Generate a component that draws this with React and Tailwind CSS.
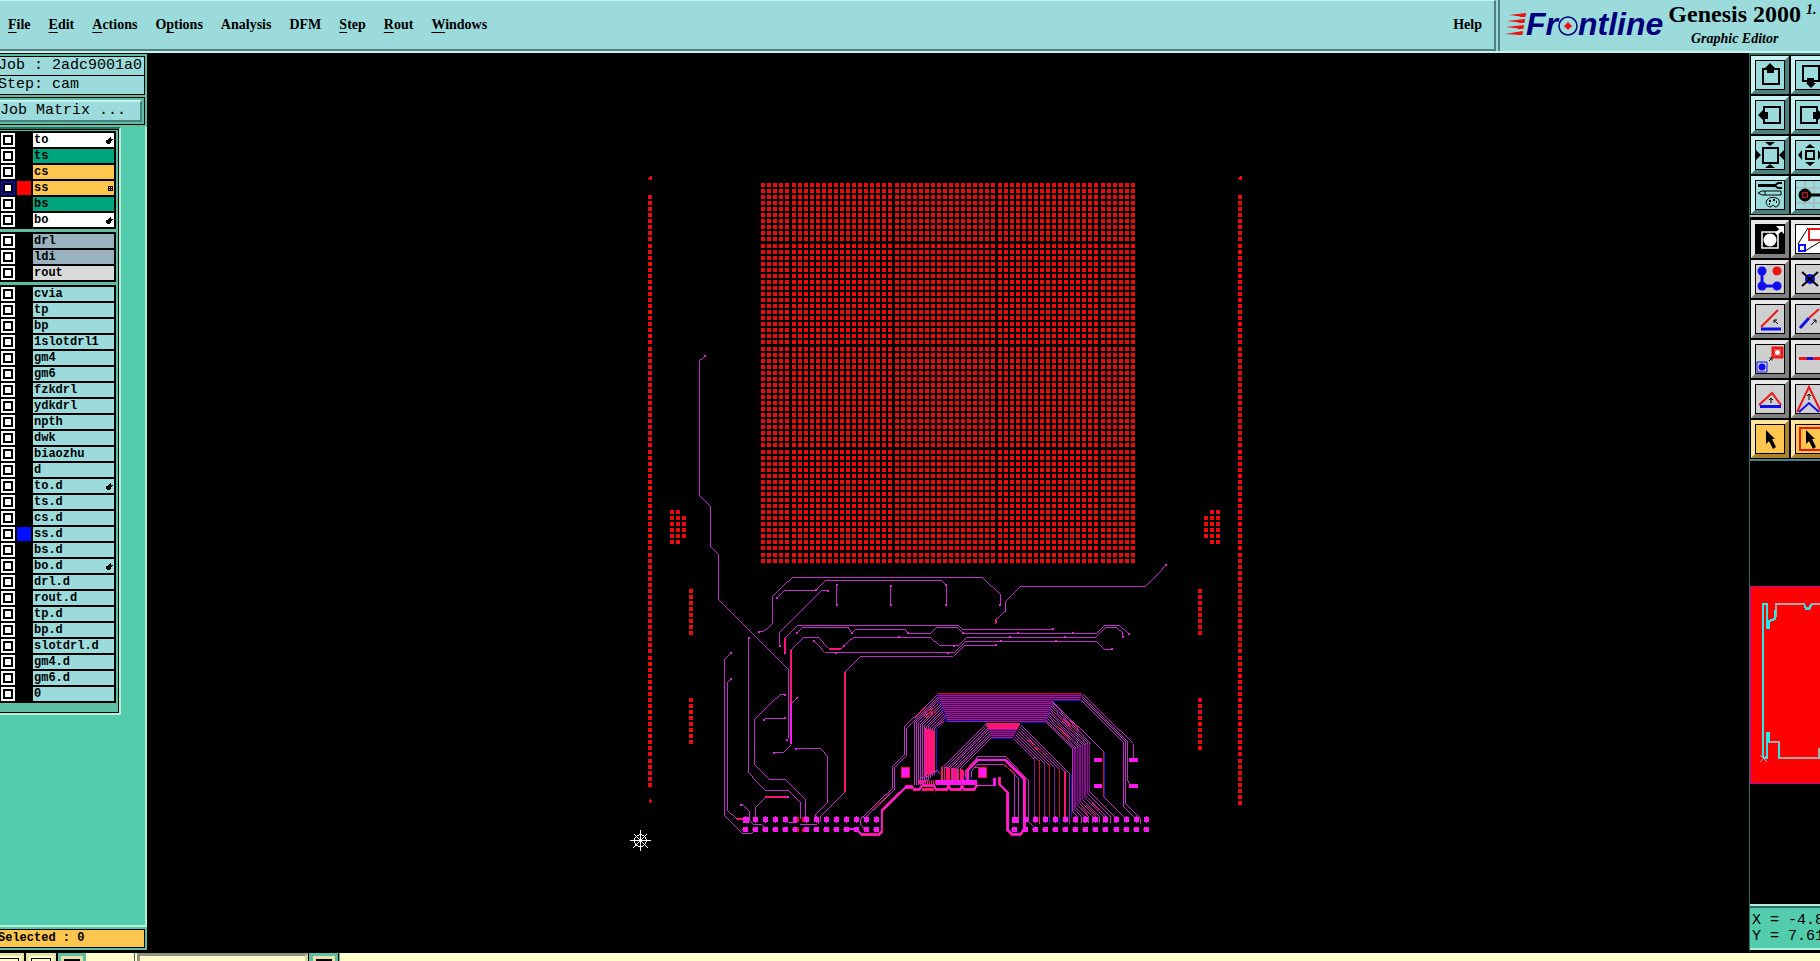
import React, { useState } from 'react';

const MENUS = [
  { label: 'File', key: 0 },
  { label: 'Edit', key: 0 },
  { label: 'Actions', key: 0 },
  { label: 'Options', key: 1 },
  { label: 'Analysis', key: -1 },
  { label: 'DFM', key: -1 },
  { label: 'Step', key: 0 },
  { label: 'Rout', key: 0 },
  { label: 'Windows', key: 0 },
];

const LAYER_GROUPS = [
  [
    { name: 'to', bg: 'bg-white', mark: 'hand' },
    { name: 'ts', bg: 'bg-[#00a57c]' },
    { name: 'cs', bg: 'bg-[#fcc64f]' },
    { name: 'ss', bg: 'bg-[#fcc64f]', swatch: 'bg-[#ff0000]', mark: 'grid' },
    { name: 'bs', bg: 'bg-[#00a57c]' },
    { name: 'bo', bg: 'bg-white', mark: 'hand' },
  ],
  [
    { name: 'drl', bg: 'bg-[#9ab2bd]' },
    { name: 'ldi', bg: 'bg-[#9ab2bd]' },
    { name: 'rout', bg: 'bg-[#d9d9d9]' },
  ],
  [
    { name: 'cvia' },
    { name: 'tp' },
    { name: 'bp' },
    { name: '1slotdrl1' },
    { name: 'gm4' },
    { name: 'gm6' },
    { name: 'fzkdrl' },
    { name: 'ydkdrl' },
    { name: 'npth' },
    { name: 'dwk' },
    { name: 'biaozhu' },
    { name: 'd' },
    { name: 'to.d', mark: 'hand' },
    { name: 'ts.d' },
    { name: 'cs.d' },
    { name: 'ss.d', swatch: 'bg-[#0010ff]' },
    { name: 'bs.d' },
    { name: 'bo.d', mark: 'hand' },
    { name: 'drl.d' },
    { name: 'rout.d' },
    { name: 'tp.d' },
    { name: 'bp.d' },
    { name: 'slotdrl.d' },
    { name: 'gm4.d' },
    { name: 'gm6.d' },
    { name: '0' },
  ],
];

const MenuLabel = ({ label, hot }) => {
  if (hot < 0) return label;
  return (
    <>
      {label.slice(0, hot)}
      <span className="underline decoration-1 underline-offset-[3px]">{label[hot]}</span>
      {label.slice(hot + 1)}
    </>
  );
};

const HandMark = () => (
  <svg width="7" height="7" viewBox="0 0 7 7" shapeRendering="crispEdges" aria-hidden="true">
    <path d="M4 0h1v2h2v1h-1v1h-1v2h-1v1h-3v-1h-1v-3h2v-1h1v-1h1z" />
  </svg>
);

const GridMark = () => (
  <svg width="5" height="5" viewBox="0 0 5 5" shapeRendering="crispEdges" aria-hidden="true">
    <path d="M0 0h5v5h-5zM1 1v1h1v-1zM3 1v1h1v-1zM1 3v1h1v-1zM3 3v1h1v-1z" fillRule="evenodd" />
  </svg>
);

const LayerRow = ({ layer, active, onToggle }) => (
  <div className="flex h-[14px] gap-[2px]">
    <input
      type="checkbox"
      aria-label={`Show layer ${layer.name}`}
      checked={active}
      onChange={onToggle}
      className="h-[14px] w-[14px] shrink-0 appearance-none border-2 border-white bg-white shadow-[inset_0_0_0_2px_#000] checked:border-[#0a0aa8]"
    />
    <span className={`w-[14px] shrink-0 ${layer.swatch || 'bg-black'}`} />
    <button
      className={`flex min-w-0 flex-1 items-center justify-between px-px text-left text-[12px] leading-[14px] font-bold ${
        layer.bg || 'bg-[#9cdbdb]'
      }`}
    >
      {layer.name}
      {layer.mark === 'hand' && <HandMark />}
      {layer.mark === 'grid' && <GridMark />}
    </button>
  </div>
);

const Sidebar = () => {
  const [visible, setVisible] = useState(['ss']);

  const toggle = (name) => {
    setVisible((prev) => (prev.includes(name) ? prev.filter((n) => n !== name) : [...prev, name]));
  };

  return (
    <aside className="flex w-[147px] shrink-0 flex-col overflow-hidden border-b-[3px] border-black bg-[#5fbfa5] font-['Liberation_Mono',monospace] text-black">
      <div className="border-t border-black pt-[2px] pr-[2px] text-[15px] leading-[18px] whitespace-pre">
        <div className="h-[20px] border-y border-r border-black bg-[#9cdbdb]">
          <div className="-ml-[2px]">Job : 2adc9001a0</div>
        </div>
        <div className="h-[19px] border-r border-b border-black bg-[#9cdbdb]">
          <div className="-ml-[2px]">Step: cam</div>
        </div>
        <div className="mt-[2px] border-y border-r border-black py-[2px] pr-[2px]">
          <button className="block h-[22px] w-full border-t-2 border-r-2 border-b-2 border-t-[#c9f2f2] border-r-[#4f8080] border-b-[#4f8080] bg-[#9cdbdb] text-left">
            Job Matrix ...
          </button>
        </div>
      </div>

      <div className="mt-[2px] flex-1 border-r-2 border-b-2 border-[#b0f0dc] bg-[#52ccac]">
        <div className="w-[121px] border-t-2 border-r-2 border-b-2 border-t-[#2a6e5d] border-r-[#b0f0dc] border-b-[#b0f0dc]">
          <div className="flex flex-col gap-[3px] border-t border-r border-b border-black bg-[#5fbfa5] pt-px pr-[2px] pb-[9px]">
            {LAYER_GROUPS.map((group, i) => (
              <div key={i} className="flex flex-col gap-[2px] bg-black py-[2px] pr-[2px] pl-px">
                {group.map((layer) => (
                  <LayerRow
                    key={layer.name}
                    layer={layer}
                    active={visible.includes(layer.name)}
                    onToggle={() => toggle(layer.name)}
                  />
                ))}
              </div>
            ))}
          </div>
        </div>
      </div>

      <div className="py-[2px] pr-[2px]">
        <div className="h-[19px] border-y border-r border-black bg-[#fcc64f] text-[12px] leading-[17px] font-bold">
          <div className="-ml-[2px]">Selected : 0</div>
        </div>
      </div>
    </aside>
  );
};

const Logo = () => (
  <div className="flex h-[34px] items-center text-[32px] leading-[34px] font-bold text-[#00007c] italic font-['Liberation_Sans',sans-serif]">
    <svg width="21" height="24" viewBox="0 0 21 24" fill="#ee1111" aria-hidden="true">
      <path d="M4 3 21 1 20 5zM2 9 20 7 19 11zM1 15 19 13 18 17zM0 22 18 19 17 23z" />
      <path d="M14 2h7l-1 3h-5zM13 8h7l-1 3h-5zM12 14h7l-1 3h-5zM11 20h7l-1 3h-5z" />
    </svg>
    <span>Fr</span>
    <svg width="20" height="24" viewBox="0 0 20 24" aria-hidden="true">
      <circle cx="10" cy="14" r="9" fill="none" stroke="#00007c" strokeWidth="1.5" />
      <path d="M10 10l4 4-4 4-4-4z" fill="#ee1111" />
    </svg>
    <span>ntline</span>
  </div>
);

const Header = () => (
  <header className="flex h-[53px] shrink-0 overflow-hidden border-b-2 border-[#c9f2f2] bg-[#9cdbdb] font-['Liberation_Serif',serif] font-bold text-black">
    <nav className="mr-[2px] flex flex-1 items-center gap-[18px] border-t border-r-2 border-b-2 border-t-[#c9f2f2] border-r-[#4f8080] border-b-[#4f8080] pr-[12px] pl-2 text-[14px] leading-[20px]">
      {MENUS.map((menu) => (
        <button key={menu.label}>
          <MenuLabel label={menu.label} hot={menu.key} />
        </button>
      ))}
      <button className="ml-auto">Help</button>
    </nav>
    <div className="flex w-[322px] shrink-0 gap-[5px] overflow-hidden border-l-2 border-[#4f8080] pl-[5px]">
      <div className="pt-[7px]">
        <Logo />
      </div>
      <div className="shrink-0 text-center">
        <div className="text-[24px] leading-[28px]">Genesis 2000</div>
        <div className="text-[14px] leading-[22px] italic">Graphic Editor</div>
      </div>
      <div className="shrink-0 text-[14px] leading-[20px] italic">1.</div>
    </div>
  </header>
);

// pads sit on a 6px lattice that gains one pixel every 17 cells
const latX = (i) => 761 + 6 * i + Math.floor((i + 12) / 17);
const latY = (i) => 183 + 6 * i + Math.floor((i + 7) / 17);
const range = (from, to) => Array.from({ length: to - from + 1 }, (_, i) => from + i);
const dot = (x, y) => `M${x} ${y}h4v4h-4z`;

const strip = (x, y, count) => range(0, count - 1).map((i) => dot(x, y + 6 * i)).join('');

const PAD_FIELD = range(0, 61)
  .map((c) => range(0, 62).map((r) => dot(latX(c), latY(r))).join(''))
  .join('');

const EDGE_PADS = [
  range(2, 99).map((r) => dot(648, latY(r))).join(''),
  range(2, 102).map((r) => dot(1238, latY(r))).join(''),
  strip(670, 510, 6),
  strip(676, 510, 6),
  strip(682, 516, 4),
  strip(1204, 516, 4),
  strip(1210, 510, 6),
  strip(1216, 510, 6),
  strip(689, 589, 8),
  strip(689, 698, 8),
  strip(1198, 589, 8),
  strip(1198, 698, 9),
].join('');

// traces use three drawing units to the pixel
const TRACES = [
  '256,-373 238,-357 238,47 271,79 271,200 295,223 295,358 505,567 505,775 500,780',
  '417,456 430,456 458,430 458,349 517,292 1088,292 1142,345 1142,375',
  '470,354 495,331 588,331 618,301 965,301 979,315 979,375',
  '480,498 480,457 604,332 625,332',
  '651,315 651,375',
  '813,318 813,375',
  '495,520 495,475 533,436 1015,436 1027,448 1299,448',
  '531,460 549,442 684,442 696,459 708,448 855,448 866,460 932,460 950,442 1013,442 1030,460 1430,460 1453,436 1498,436 1527,462',
  '513,510 552,472 594,472 626,505 664,505 700,472 932,472 959,498 1013,498 1040,472 1428,472 1458,442 1490,442 1509,460 1509,470',
  '582,483 614,517 1005,517 1037,484 1430,484 1453,508 1477,508',
  '675,576 721,529 1000,529 1033,496 1128,496',
  '1128,432 1128,418 1157,393 1157,365 1201,319 1578,319 1638,256',
  '675,937 603,1008 603,1020 592,1033 540,1033',
  '513,795 488,819 461,819',
  '517,668 531,654',
  '333,519 313,538 313,1006 367,1060 396,1060 405,1050',
  '333,597 322,608 322,990 350,1017 375,1017',
  '387,472 387,880 436,931 506,931 542,967 542,1017',
  '495,645 479,645 403,718 403,853 448,898 497,898 556,957 556,1017',
  '432,720 438,715 495,715',
  '527,807 602,807 623,829 623,967 588,1003 588,1017',
  '406,1017 406,984 436,954',
  '363,975 370,975 388,993 388,1020 400,1033 423,1033 430,1040',
  '505,1028 530,1028',
];

const HOT_TRACES = ['675,576 675,937', '513,510 513,670', '495,475 495,520', '626,507 664,507', '436,951 505,951', '350,1017 370,1017'];

const VIAS = [
  [256, -373], [417, 456], [472, 354], [588, 330], [625, 332], [480, 498], [495, 520], [651, 315], [651, 375],
  [813, 318], [813, 375], [978, 375], [978, 315], [1140, 375], [1638, 256], [1299, 447], [531, 459], [696, 459],
  [864, 459], [837, 470], [1029, 459], [1194, 459], [1359, 459], [1169, 470], [1335, 470], [1308, 482], [1527, 462],
  [1509, 470], [1477, 507], [582, 483], [648, 519], [672, 498], [984, 518], [1002, 498], [1128, 496], [1143, 484],
  [387, 474], [333, 519], [333, 597], [531, 654], [495, 645], [432, 720], [495, 714], [501, 780], [527, 807],
  [461, 819], [363, 975], [504, 951],
];

const PADS_LEFT = [375, 406, 436, 466, 496, 527, 560, 589, 619, 649, 680, 709, 739, 769];
const PADS_RIGHT = [464, 497, 526, 556, 586, 616, 646, 676, 706, 736, 769, 799, 829, 859];

const MAGENTA = '#ff18f0';
const VIOLET = '#c22fc8';
const PINK = '#ff1478';

const Fanout = () => (
  <g transform="translate(720 540)" fill="none" stroke={VIOLET} strokeWidth="3">
    {/* upper bus */}
    <path d="M232 100H667L660 123H580L558 187H262z" fill="#4a0850" stroke="none" />
    {range(0, 14).map((k) => (
      <path
        key={k}
        d={`M${232 + 2 * k} ${102 + 6 * k}H${k < 4 ? 667 - 2 * k : 588 - 2 * k}`}
        stroke={k === 0 ? '#c8102c' : '#a01aa0'}
      />
    ))}
    <path d="M580 123H662M262 183H380M480 187H558M232 104L260 182M580 124L558 187" stroke="#1010b0" />

    {/* inner bus */}
    <path d="M378 188H482L462 236H397z" fill="#4a0850" stroke="none" />
    {range(0, 7).map((k) => (
      <path
        key={k}
        d={`M${379 + 2 * k} ${192 + 6 * k}H${481 - 3 * k}`}
        stroke={k < 3 ? PINK : '#a01aa0'}
        strokeWidth={k < 3 ? 5 : 3}
      />
    ))}
    <path d="M397 237H462" stroke="#1010b0" />

    {/* far left pair */}
    <path d="M232 104L135 199V283L98 320V384L8 472M234 110L141 203V285L104 322V388L18 472" />
    <path d="M200 140L165 175M90 400L40 446" stroke="#e01030" />

    {/* left fan */}
    {range(0, 11).map((j) => (
      <path
        key={j}
        d={`M${236 + 2 * j} ${114 + 6 * j}L${163 + 6 * j} ${187 + 2 * j}V${j < 5 ? 374 : 374 - (j - 4) * 5}`}
        stroke={j === 11 ? '#1818c8' : VIOLET}
      />
    ))}
    <path d="M199 204V350M205 206V346M211 208V342M217 210V338M223 212V336" stroke={PINK} strokeWidth="5" />
    <path d="M195 158l26-14M192 166l34-14M198 172l30-16M232 196l20-12" stroke="#f01050" />
    <path d="M180 355L200 350 232 330 240 342" />

    {/* inner left fan */}
    {range(0, 7).map((j) => (
      <path key={j} d={`M${379 + 2 * j} ${192 + 6 * j}L${245 + 8 * j} 326V362`} />
    ))}
    {range(0, 9).map((j) => (
      <path key={j} d={`M${247 + 7 * j} ${320 + j}V362`} stroke={PINK} strokeWidth="5" />
    ))}
    <path d="M316 330V362M334 336V362" stroke="#1818c8" />

    {/* inner right fan */}
    {range(0, 7).map((j) => (
      <path key={j} d={`M${462 + 3 * j} ${236 - 6 * j}L${525 + 15 * j} ${299 + 6 * j}`} />
    ))}
    {range(0, 7).map((j) => (
      <path
        key={j}
        d={`M${525 + 15 * j} ${292 + 7 * j}V${j % 2 ? 492 : 470}`}
        stroke={['#8a168c', '#ff1478', '#8a168c', '#1818c8', '#8a168c', '#1818c8', '#ff1478', '#a018a0'][j]}
        strokeWidth={j === 6 ? 5 : 3}
      />
    ))}
    <path d="M540 300V470M570 312V470M600 326V470" stroke="#c8102c" />
    <path d="M635 345V470" stroke="#1818c8" />
    <path d="M505 240l18 14M510 250l24 20M530 262l24 20" stroke="#f01050" />

    {/* right fan */}
    {range(0, 10).map((j) => (
      <path
        key={j}
        d={`M${558 + 2 * j} ${187 - 6 * j}L${638 + 5 * j} ${267 - 2 * j}V${455 - 6 * j}L${653 + 11 * j} 470V490`}
        stroke={j > 1 && j < 9 ? '#b428b8' : VIOLET}
      />
    ))}
    <path d="M640 268V452L690 396V250z" fill="#5c0c62" fillOpacity="0.7" stroke="none" />
    <path
      d="M605 172l30 26M610 184l36 32M592 198l36 34M630 180l28 30M598 212l24 24M662 440l22 24M680 436l26 28M695 428l28 26"
      stroke="#f01050"
    />
    <path d="M580 128L731 274V410L792 470" />
    <path d="M730 274V410" stroke="#c8102c" />
    <path d="M733 276V410" stroke="#1818c8" />

    {/* far right */}
    <path d="M668 101L820 251V294M667 108L802 243V362L812 374M665 114L796 245V430L834 468M663 120L790 247V440L820 470M834 468L842 476V492" />

    {/* ring around the centre pad */}
    <path d="M318 352V330L352 291H437L507 362V485L520 498M334 350V334L352 314H432L475 354V490M345 322H360M463 346V470" />
    <path d="M437 316L464 342M430 312L455 334" stroke="#e01030" />
    <path d="M322 360V331L352 300H436L494 357V508L480 523H456L443 512V398L419 374V352" stroke={PINK} strokeWidth="8" />
    <path d="M324 360V332L353 301H436L493 358V506L480 522H458L444 510V398L419 372V352" stroke={MAGENTA} strokeWidth="5" />
    <path d="M351 376H402V354M405 378V354" stroke={MAGENTA} strokeWidth="4" />

    {/* connector row */}
    <path d="M176 367H230" stroke={PINK} strokeWidth="13" strokeDasharray="4 2" />
    <path d="M228 367H350" stroke={MAGENTA} strokeWidth="14" />
    <path
      d="M135 380H156L163 389H178L186 377M186 389H222M186 377H222L228 389H260L266 377 272 389H302L306 377 312 389H342L351 376"
      stroke={PINK}
      strokeWidth="7"
    />
    <path
      d="M135 380H156L163 389H178L186 377H222L228 389H260L266 377 272 389H302L306 377 312 389H342L351 376"
      stroke={MAGENTA}
      strokeWidth="4"
    />

    <g fill={MAGENTA} stroke="#e8103c">
      <rect x="124" y="322" width="24" height="30" />
      <rect x="357" y="322" width="24" height="30" />
    </g>
    <path d="M702 294h24v12h-24zM702 373h24v12h-24zM807 294h26v12h-26zM807 372h26v12h-26z" fill={MAGENTA} stroke="none" />
  </g>
);

const BoardCanvas = () => (
  <main className="min-w-0 flex-1 bg-black">
    <svg className="block h-full w-full" viewBox="147 53 1602 900" shapeRendering="crispEdges" role="img" aria-label="Board layers">
      <path d={PAD_FIELD} fill="#ea0c0c" />
      <path d={EDGE_PADS} fill="#ea0c0c" />
      <path d="M648 178l2-2h2v4h-3zM648 801l2-2 2 2-2 2zM1238 178l2-2h2v4h-3z" fill="#ea0c0c" />
      <g transform="translate(620 480) scale(0.33333)">
        <g fill="none" stroke={VIOLET} strokeWidth="3">
          {TRACES.map((points) => (
            <polyline key={points} points={points} />
          ))}
        </g>
        <g fill="none" stroke={PINK} strokeWidth="5">
          {HOT_TRACES.map((points) => (
            <polyline key={points} points={points} />
          ))}
        </g>
        <path d="M513 670V792" stroke={MAGENTA} strokeWidth="5" />
        {VIAS.map(([x, y]) => (
          <rect key={`${x}-${y}`} x={x - 3} y={y - 3} width="6" height="6" fill="#e028dc" />
        ))}
        <path d="M1128 420V430" stroke={PINK} strokeWidth="6" />
        <Fanout />
        <g fill="none">
          <path d="M680 1047H708L725 1064H776L786 1056V992L857 922H880" stroke={PINK} strokeWidth="8" />
          <path d="M680 1047H708L725 1064H776L785 1056V992L857 921H880" stroke={MAGENTA} strokeWidth="5" />
          <path d="M742 1017L727 1010 721 1020V1032L732 1044" stroke={VIOLET} strokeWidth="3" />
        </g>
        {[...PADS_LEFT, ...PADS_RIGHT.map((x) => x + 720)].map((x, i) => (
          <g key={x} fill={MAGENTA}>
            <rect x={x - 7} y={1010} width={i % 14 === 0 ? 18 : 15} height={i % 14 === 0 ? 18 : 15} />
            <rect x={x - 7} y={1041} width="15" height="15" />
            <rect x={x - 10} y={1047} width="3" height="3" />
            <rect x={x - 1} y={1007} width="3" height="21" />
          </g>
        ))}
        <path d="M534 1012V1026M549 1012V1026M534 1044V1056M549 1044V1056" stroke="#e01030" strokeWidth="4" />
        <g fill="none" stroke="#ffffff" strokeWidth="3">
          <path d="M30 1082H93M61 1050V1114M40 1061L83 1104M83 1061L40 1104" />
          <circle cx="61" cy="1082" r="18" />
        </g>
      </g>
    </svg>
  </main>
);

const Pointer = () => <path d="M11 6l9 9-3 0 4 8-3 2-4-8-3 3z" fill="#000" stroke="none" />;

const BLUE = '#1010ee';
const RED = '#e81818';

const VIEW_TOOLS = [
  { label: 'Pan up', icon: <path d="M8 9H24V24H8z" fill="none" strokeWidth="2" />, solid: 'M15 3l5 5h-1v5h-7v-5h-2z' },
  { label: 'Pan down', icon: <path d="M8 6H24V21H8z" fill="none" strokeWidth="2" />, solid: 'M16 28l-5-5h1v-5h7v5h2z' },
  { label: 'Pan left', icon: <path d="M9 7H25V23H9z" fill="none" strokeWidth="2" />, solid: 'M3 15l5-5v2h5v7h-5v1z' },
  { label: 'Pan right', icon: <path d="M6 7H22V23H6z" fill="none" strokeWidth="2" />, solid: 'M28 15l-5-5v2h-5v7h5v1z' },
  {
    label: 'Zoom out',
    icon: <path d="M8 8H23V23H8z" fill="none" strokeWidth="2" />,
    solid: 'M10 2h10l-5 4zM10 28h10l-5-4zM1 10v10l5-5zM29 10v10l-5-5z',
  },
  {
    label: 'Zoom in',
    icon: <path d="M11 11H19V19H11z" fill="none" strokeWidth="2" />,
    solid: 'M10 8h10l-5-4zM10 22h10l-5 4zM7 10v10l-4-5zM23 10v10l4-5z',
  },
  {
    label: 'Display settings',
    icon: (
      <g fill="none">
        <path d="M3 5.5H20" strokeWidth="3" />
        <path d="M27 3h-4l-3 2.5 3 2.500h4" strokeWidth="2" />
        <path d="M3 13l4-2h19v4H7zM10 11v4" />
        <path d="M12 20c3-4 10-3 12 0 1 4-1 7-4 7l-2-2-2 2c-4 0-6-4-4-7z" />
        <path d="M14 21h2M18 20h2M21 22h1M14 24h1" strokeWidth="2" />
      </g>
    ),
  },
  {
    label: 'Snap',
    icon: (
      <g fill="none">
        <path d="M10 1V29M19 1V29M1 8H29M1 23H29" stroke="#b0a8a8" />
        <circle cx="10" cy="15" r="6" fill="#000" />
        <path d="M16 15H30" strokeWidth="3" />
        <path d="M7.5 12.5h5v5h-5z" stroke="#d01818" />
      </g>
    ),
  },
];

const EDIT_TOOLS = [
  {
    label: 'Add feature',
    face: 'bg-white',
    icon: (
      <g>
        <path d="M1 1H29V29H1z" />
        <path d="M7 8H23V24H7z" fill="none" stroke="#fff" strokeWidth="1.5" />
        <circle cx="15" cy="16" r="6.5" fill="#fff" stroke="none" />
        <path d="M21 10l6-5" stroke="#fff" strokeWidth="3" />
        <path d="M21 2h8v8z" fill="#fff" stroke="none" />
      </g>
    ),
  },
  {
    label: 'Change size',
    face: 'bg-white',
    icon: (
      <g fill="none">
        <path d="M3 20L13 4M10 27L28 16" />
        <path d="M14 5H28V16H14z" stroke={RED} strokeWidth="2" />
        <path d="M4 21H10V27H4z" stroke={BLUE} strokeWidth="2" />
      </g>
    ),
  },
  {
    label: 'Connect',
    icon: (
      <g fill={BLUE} stroke="none">
        <path d="M7 7V22H22" fill="none" stroke={BLUE} strokeWidth="3" />
        <circle cx="7" cy="7" r="4.5" />
        <circle cx="7" cy="22" r="4.5" />
        <circle cx="22" cy="22" r="4.5" />
        <circle cx="22" cy="7" r="4.5" fill="#ee1111" />
      </g>
    ),
  },
  {
    label: 'Delete',
    icon: (
      <g>
        <circle cx="15" cy="15" r="5" fill={BLUE} stroke="none" />
        <path d="M7 8L23 22M23 8L7 22" strokeWidth="2" />
      </g>
    ),
  },
  {
    label: 'Change angle',
    icon: (
      <g fill="none">
        <path d="M6 23L23 6" stroke={RED} strokeWidth="2" />
        <path d="M6 25H26" stroke={BLUE} strokeWidth="3" />
        <path d="M19 16l4 4M19 19v-3h3" />
      </g>
    ),
  },
  {
    label: 'Extend line',
    icon: (
      <g fill="none">
        <path d="M14 14L24 5" stroke={RED} strokeWidth="2" />
        <path d="M5 24L14 14" stroke={BLUE} strokeWidth="3" />
        <path d="M16 21l5-5M18 16h3v3" />
      </g>
    ),
  },
  {
    label: 'Move',
    icon: (
      <g fill="none">
        <path d="M18 4H27V13H18z" fill="#fff" stroke={RED} strokeWidth="3" />
        <circle cx="22.5" cy="8.5" r="3" stroke={RED} />
        <path d="M2 18H12V28H2z" stroke={BLUE} />
        <circle cx="7" cy="23" r="3.5" fill={BLUE} stroke="none" />
        <path d="M14 17l3-3M14.5 14h2.500v2.500" />
      </g>
    ),
  },
  {
    label: 'Split line',
    icon: (
      <g fill="none" strokeWidth="3">
        <path d="M4 14.5H30" stroke={RED} />
        <path d="M12 14.5H18" stroke={BLUE} />
      </g>
    ),
  },
  {
    label: 'Slide segment',
    icon: (
      <g fill="none">
        <path d="M4 21L17 9 26 21" stroke={RED} strokeWidth="2" />
        <path d="M5 22.5H26" stroke={BLUE} strokeWidth="3" />
        <path d="M16 19v-5M14 16l2-2 2 2" />
      </g>
    ),
  },
  {
    label: 'Slide corner',
    icon: (
      <g fill="none" strokeWidth="2">
        <path d="M2 28L14 3 26 28" stroke={RED} />
        <path d="M4 28L14 19 24 28" stroke={BLUE} />
        <path d="M14 16v-6M12 12l2-2 2 2" strokeWidth="1" />
      </g>
    ),
  },
  { label: 'Select feature', face: 'bg-[#fcc64f]', icon: <Pointer /> },
  {
    label: 'Select in window',
    face: 'bg-[#fcc64f]',
    icon: (
      <g>
        <path d="M5 4H27V26H5z" fill="none" stroke={RED} strokeWidth="2" />
        <Pointer />
      </g>
    ),
  },
];

const ToolButton = ({ tool, face, bevel }) => (
  <button aria-label={tool.label} className={`h-[38px] w-[38px] border-4 ${bevel} ${tool.face || face}`}>
    <span className="block h-[30px] w-[30px] border border-black">
      <svg width="28" height="28" viewBox="1 1 28 28" stroke="#000" aria-hidden="true">
        {tool.icon}
        {tool.solid && <path d={tool.solid} stroke="none" />}
      </svg>
    </span>
  </button>
);

const Overview = () => (
  <svg
    className="block w-[80px] flex-1 bg-black"
    viewBox="1750 461 80 444"
    preserveAspectRatio="xMinYMin slice"
    shapeRendering="crispEdges"
    role="img"
    aria-label="Overview"
  >
    <rect x="1750" y="586" width="90" height="198" fill="#b0109a" />
    <rect x="1751" y="587" width="90" height="196" fill="#ff0000" />
    <g fill="none" strokeWidth="2">
      <path d="M1776 617V604H1804L1806 608H1810L1812 604H1830M1768 742H1779V758H1819V748" stroke="#a8a8a8" />
      <path
        d="M1763 758V604H1767V628H1769V621L1775 619V610M1804 604L1806 609H1809L1811 604M1767 758V733H1769V742M1779 745V758M1763 758H1768"
        stroke="#28e8e8"
      />
      <path d="M1760 755L1767 762M1767 755L1760 762" stroke="#a8a8a8" strokeWidth="1" />
    </g>
  </svg>
);

const ToolPanel = () => (
  <aside className="flex w-[71px] shrink-0 flex-col overflow-hidden border-b-[3px] border-l border-b-black border-l-[#2f6e60] bg-black">
    <div className="grid w-[79px] grid-cols-2 gap-[2px] border-t-2 border-[#2f6e60] pt-px pb-px pl-px">
      {VIEW_TOOLS.map((tool) => (
        <ToolButton
          key={tool.label}
          tool={tool}
          face="bg-[#9cdbdb]"
          bevel="border-t-[#c9f2f2] border-l-[#c9f2f2] border-r-[#4f8080] border-b-[#4f8080]"
        />
      ))}
    </div>
    <div className="grid w-[79px] grid-cols-2 gap-[2px] border-t-2 border-b-2 border-t-[#b8c8c0] border-b-[#4f8080] pt-[3px] pb-px pl-px">
      {EDIT_TOOLS.map((tool) => (
        <ToolButton
          key={tool.label}
          tool={tool}
          face="bg-[#cfcfcf]"
          bevel={
            tool.face === 'bg-[#fcc64f]'
              ? 'border-t-[#fde3a0] border-l-[#fde3a0] border-r-[#a8822c] border-b-[#a8822c]'
              : 'border-t-[#e8e8e8] border-l-[#e8e8e8] border-r-[#808080] border-b-[#808080]'
          }
        />
      ))}
    </div>
    <Overview />
    <div className="shrink-0 border-y-2 border-[#b0f0dc] bg-[#52ccac] font-['Liberation_Mono',monospace] text-[15px] leading-[16px] whitespace-pre text-black">
      <div className="border-t-2 border-[#2f6e60] pt-[5px] pb-[3px] pl-[2px]">
        <div>X = -4.8</div>
        <div>Y = 7.61</div>
      </div>
    </div>
  </aside>
);

const CommandBar = () => (
  <footer className="flex h-[8px] shrink-0 overflow-hidden bg-[#ffffcc]">
    <button aria-label="Previous command" className="h-[28px] w-[24px] border-[3px] border-l-0 border-[#e6e2a8] p-[2px] pl-0">
      <span className="block h-full border border-l-0 border-black" />
    </button>
    <span className="w-[2px] bg-black" />
    <button aria-label="Next command" className="h-[28px] w-[30px] border-[3px] border-[#e6e2a8] p-[2px]">
      <span className="block h-full border border-black" />
    </button>
    <span className="w-[2px] bg-black" />
    <button aria-label="History" className="h-[28px] w-[28px] border-[3px] border-[#5fbfa5] bg-[#e6e2a8] p-[3px]">
      <span className="block h-full border-2 border-black" />
    </button>
    <span className="mr-[2px] ml-[48px] w-px bg-[#2f6e60]" />
    <input
      aria-label="Command"
      className="h-[28px] w-[171px] border-[3px] border-t-[#95937a] border-r-[#d8d5a0] border-b-[#d8d5a0] border-l-[#95937a] bg-[#ffffcc] px-1"
    />
    <span className="w-[2px] border-l border-black bg-[#5fbfa5]" />
    <button aria-label="Run command" className="h-[28px] w-[28px] border-[3px] border-[#5fbfa5] bg-[#e6e2a8] p-[3px]">
      <span className="block h-full border-2 border-black" />
    </button>
    <span className="w-[2px] border-l border-black bg-[#5fbfa5]" />
  </footer>
);

const App = () => {
  return (
    <div className="flex h-screen flex-col overflow-hidden bg-black">
      <Header />
      <div className="flex min-h-0 flex-1">
        <Sidebar />
        <BoardCanvas />
        <ToolPanel />
      </div>
      <CommandBar />
    </div>
  );
};

export default App;
